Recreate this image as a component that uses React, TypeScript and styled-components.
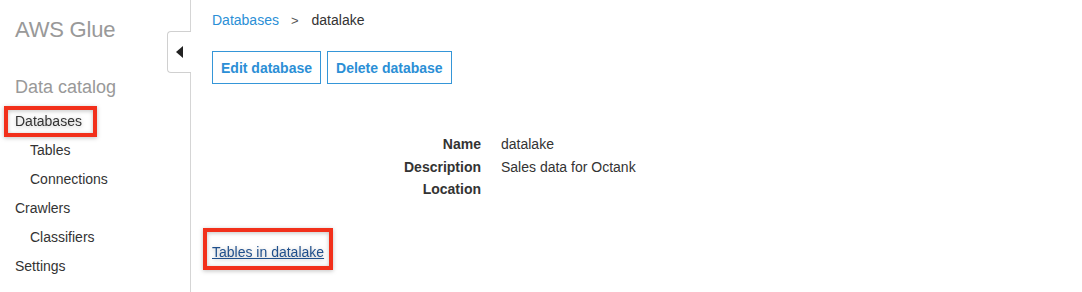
import React from 'react';
import styled, { createGlobalStyle } from 'styled-components';

const GlobalStyle = createGlobalStyle`
  html, body {
    margin: 0;
    padding: 0;
    background: #fff;
    font-family: "Liberation Sans", Arial, Helvetica, sans-serif;
    color: #333;
  }
`;

const Page = styled.div`
  display: flex;
  width: 1082px;
  height: 292px;
  overflow: hidden;
`;

const Sidebar = styled.nav`
  position: relative;
  width: 191px;
  flex-shrink: 0;
  border-right: 1px solid #d5d5d5;
  padding: 17px 0 0 15px;
  box-sizing: border-box;
`;

const Title = styled.div`
  font-size: 22px;
  line-height: 26px;
  color: #999;
  letter-spacing: -0.2px;
`;

const Section = styled.div`
  margin-top: 33px;
  font-size: 18px;
  line-height: 22px;
  color: #999;
`;

const NavList = styled.ul`
  list-style: none;
  margin: 15px 0 0;
  padding: 0;
`;

const NavItem = styled.li<{ $indent?: boolean }>`
  font-size: 14px;
  line-height: 17px;
  height: 29px;
  padding-left: ${(p) => (p.$indent ? 15 : 0)}px;
  color: #333;
`;

const Highlight = styled.span`
  display: inline-block;
  margin: -3px 0 -3px -7px;
  padding: 3px 11px 3px 7px;
  outline: 4px solid #f2301b;
  filter: drop-shadow(0 1px 2px rgba(0, 0, 0, 0.25));
`;

const CollapseTab = styled.div`
  position: absolute;
  top: 31px;
  right: -1px;
  width: 23px;
  height: 40px;
  background: #fff;
  border: 1px solid #d0d0d0;
  border-right: none;
  border-radius: 4px 0 0 4px;
  display: flex;
  align-items: center;
  justify-content: center;
`;

const Main = styled.main`
  flex: 1;
  padding: 12px 0 0 21px;
`;

const Breadcrumb = styled.div`
  display: flex;
  align-items: center;
  font-size: 14px;
  line-height: 17px;
`;

const Crumb = styled.span<{ $link?: boolean }>`
  color: ${(p) => (p.$link ? '#2b8fd6' : '#333')};
`;

const Sep = styled.span`
  color: #555;
  font-size: 13px;
  margin: 0 13px 0 12px;
`;

const Actions = styled.div`
  display: flex;
  gap: 6px;
  margin-top: 22px;
`;

const Button = styled.button`
  height: 33px;
  padding: 0 8px;
  background: #fff;
  border: 1px solid #3596d8;
  color: #2b8fd6;
  font-family: inherit;
  font-size: 14px;
  font-weight: bold;
  cursor: pointer;
`;

const Details = styled.dl`
  display: grid;
  grid-template-columns: 269px auto;
  column-gap: 20px;
  row-gap: 5px;
  margin: 52px 0 0;
  font-size: 14px;
  line-height: 17.5px;
`;

const Label = styled.dt`
  text-align: right;
  font-weight: bold;
  color: #333;
`;

const Value = styled.dd`
  margin: 0;
  color: #333;
`;

const LinkBox = styled.div`
  display: inline-block;
  margin: 29px 0 0 -9px;
  padding: 12px 5px 5px 5px;
  border: 4px solid #f2301b;
  filter: drop-shadow(0 1px 2px rgba(0, 0, 0, 0.25));
`;

const TableLink = styled.a`
  color: #1f4f8c;
  font-size: 14px;
  line-height: 17px;
  text-decoration: underline;
  display: block;
`;

const navItems = [
  { label: 'Tables', indent: true },
  { label: 'Connections', indent: true },
  { label: 'Crawlers' },
  { label: 'Classifiers', indent: true },
  { label: 'Settings' },
];

export default function App() {
  return (
    <>
      <GlobalStyle />
      <Page>
        <Sidebar>
          <Title>AWS Glue</Title>
          <Section>Data catalog</Section>
          <NavList>
            <NavItem>
              <Highlight>Databases</Highlight>
            </NavItem>
            {navItems.map((item) => (
              <NavItem key={item.label} $indent={item.indent}>
                {item.label}
              </NavItem>
            ))}
          </NavList>
          <CollapseTab>
            <svg width="7" height="12" viewBox="0 0 7 12">
              <path d="M7 0 L0 6 L7 12 Z" fill="#222" />
            </svg>
          </CollapseTab>
        </Sidebar>
        <Main>
          <Breadcrumb>
            <Crumb $link>Databases</Crumb>
            <Sep>&gt;</Sep>
            <Crumb>datalake</Crumb>
          </Breadcrumb>
          <Actions>
            <Button>Edit database</Button>
            <Button>Delete database</Button>
          </Actions>
          <Details>
            <Label>Name</Label>
            <Value>datalake</Value>
            <Label>Description</Label>
            <Value>Sales data for Octank</Value>
            <Label>Location</Label>
            <Value></Value>
          </Details>
          <LinkBox>
            <TableLink href="#">Tables in datalake</TableLink>
          </LinkBox>
        </Main>
      </Page>
    </>
  );
}
